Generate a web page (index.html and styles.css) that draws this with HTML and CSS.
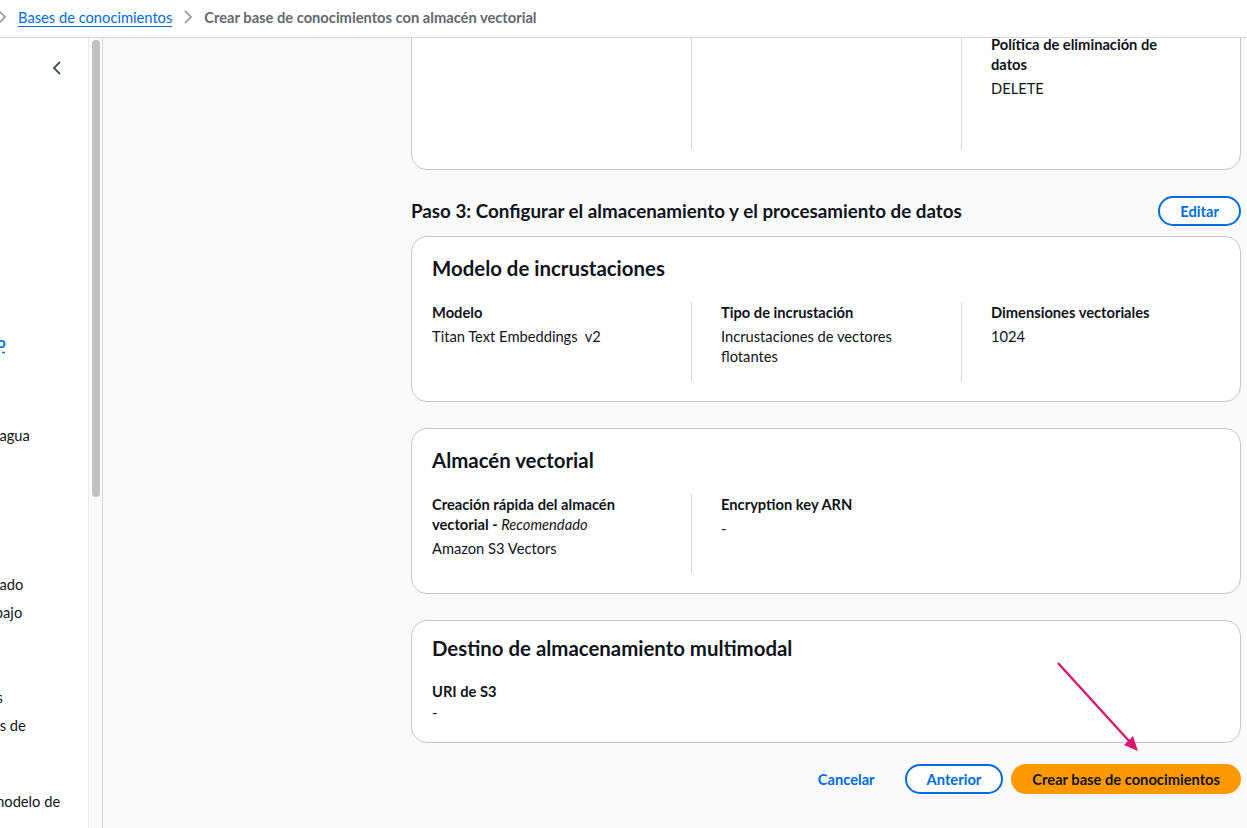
FILE: index.html
```html
<!DOCTYPE html>
<html lang="es">
<head>
<meta charset="utf-8">
<title>Crear base de conocimientos con almacén vectorial</title>
<link rel="stylesheet" href="styles.css">
</head>
<body>

<div class="crumbs">
  <svg class="chev" viewBox="0 0 10 16"><path d="M2 2l6 6-6 6"/></svg>
  <a href="#">Bases de conocimientos</a>
  <svg class="chev" viewBox="0 0 10 16"><path d="M2 2l6 6-6 6"/></svg>
  <span class="current">Crear base de conocimientos con almacén vectorial</span>
</div>

<div class="layout">
  <nav class="side">
    <svg class="collapse" viewBox="0 0 10 16"><path d="M8 2L2 8l6 6"/></svg>
    <ul class="nav">
      <li class="nav-link"><a href="#">Página de inicio – nuevo</a></li>
      <li class="gap-a">Detección de marca de agua</li>
      <li class="gap-b">Rendimiento aprovisionado</li>
      <li>Edición de flujos de trabajo</li>
      <li class="gap-c">Modelos personalizados</li>
      <li>Evaluaciones de trabajos de</li>
      <li class="gap-d">Solicitud del acceso al modelo de</li>
    </ul>
  </nav>
  <div class="scroll"><div class="thumb"></div></div>

  <main class="main">
    <!-- paso 2: bloque anterior, sólo se ve el final -->
    <section class="card card-top">
      <div class="cols">
        <div class="col"></div>
        <div class="col"></div>
        <div class="col">
          <div class="label">Política de eliminación de datos</div>
          <div class="value">DELETE</div>
        </div>
      </div>
    </section>

    <div class="step-head">
      <h2>Paso 3: Configurar el almacenamiento y el procesamiento de datos</h2>
      <button class="btn">Editar</button>
    </div>

    <section class="card">
      <h3>Modelo de incrustaciones</h3>
      <div class="cols">
        <div class="col">
          <div class="label">Modelo</div>
          <div class="value">Titan Text Embeddings&nbsp; v2</div>
        </div>
        <div class="col">
          <div class="label">Tipo de incrustación</div>
          <div class="value">Incrustaciones de vectores flotantes</div>
        </div>
        <div class="col">
          <div class="label">Dimensiones vectoriales</div>
          <div class="value">1024</div>
        </div>
      </div>
    </section>

    <section class="card">
      <h3>Almacén vectorial</h3>
      <div class="cols">
        <div class="col">
          <div class="label">Creación rápida del almacén vectorial - <em>Recomendado</em></div>
          <div class="value">Amazon S3 Vectors</div>
        </div>
        <div class="col">
          <div class="label">Encryption key ARN</div>
          <div class="value">-</div>
        </div>
      </div>
    </section>

    <section class="card card-single">
      <h3>Destino de almacenamiento multimodal</h3>
      <div class="label">URI de S3</div>
      <div class="value">-</div>
    </section>

    <div class="actions">
      <button class="btn-link">Cancelar</button>
      <button class="btn">Anterior</button>
      <button class="btn btn-primary">Crear base de conocimientos</button>
    </div>
  </main>
</div>

<!-- flecha de anotación -->
<svg class="arrow" viewBox="0 0 110 105" width="110" height="105">
  <line x1="18" y1="8" x2="89" y2="86" stroke="#d6186d" stroke-width="2.4"/>
  <polygon points="98,96 84,90 93,81" fill="#d6186d"/>
</svg>

</body>
</html>
```

FILE: styles.css
```css
* {
  box-sizing: border-box;
}
body {
  margin: 0;
  height: 828px;
  overflow: hidden;
  font-family: Lato, "Open Sans", "Liberation Sans", sans-serif;
  font-size: 14.7px;
  line-height: 20px;
  color: #0f141a;
  background-color: #fafafa;
  position: relative;
}
a {
  color: #006ce0;
}

/* breadcrumbs */
.crumbs {
  height: 38px;
  background-color: #ffffff;
  border-bottom: 1px solid #d5d5da;
  display: flex;
  align-items: center;
  gap: 11px;
  margin-left: -3px;
  padding-bottom: 4px;
}
.crumbs .chev {
  width: 10px;
  height: 16px;
  fill: none;
  stroke: #8c8c94;
  stroke-width: 1.5;
}
.crumbs a {
  text-decoration: underline;
  text-underline-offset: 3px;
}
.crumbs .current {
  color: #656871;
  font-weight: bold;
}

.layout {
  display: flex;
  height: 790px;
  overflow: hidden;
}

/* barra lateral */
.side {
  width: 88px;
  flex-shrink: 0;
  background-color: #ffffff;
  overflow: hidden;
  position: relative;
}
.collapse {
  position: absolute;
  left: 52px;
  top: 22px;
  width: 10px;
  height: 16px;
  fill: none;
  stroke: #414d5c;
  stroke-width: 1.8;
}
.nav {
  list-style: none;
  margin: 0;
  padding: 0;
  margin-left: -152px;
  width: 240px;
  padding-top: 294px;
}
.nav li {
  margin-bottom: 8px;
  white-space: nowrap;
}
.nav li.gap-a { margin-top: 73px; }
.nav li.gap-b { margin-top: 129px; }
.nav li.gap-c { margin-top: 65px; }
.nav li.gap-d { margin-top: 56px; }
.nav-link a {
  font-weight: bold;
  text-decoration: underline dashed;
  text-underline-offset: 4px;
}
.scroll {
  width: 15px;
  flex-shrink: 0;
  background-color: #fafafa;
  border-left: 1px solid #ebebeb;
  border-right: 1px solid #d5d5da;
  padding: 2px 2px 0 2px;
}
.thumb {
  height: 457px;
  background-color: #c1c1c1;
  border-radius: 5px;
  margin-left: 1px;
  width: 8px;
}

/* contenido */
.main {
  flex: 1;
  padding-left: 308px;
  padding-right: 6px;
}
.card {
  background-color: #ffffff;
  border: 1px solid #c6c6cd;
  border-radius: 16px;
  padding: 19px 20px 19px 20px;
  margin-bottom: 26px;
}
.card-top {
  margin-top: -40px;
  padding-top: 35px;
  margin-bottom: 0;
}
.card-top .col {
  height: 116px;
}
.card h3 {
  margin: 0 0 22px 0;
  font-size: 20.4px;
  line-height: 24px;
  font-weight: bold;
}
.card-single {
  padding-top: 15px;
  padding-bottom: 20px;
  margin-bottom: 0;
}
.card-single h3 {
  margin-bottom: 21px;
}
.cols {
  display: grid;
  grid-template-columns: 259px 270px 1fr;
}
.col {
  padding-bottom: 16px;
  padding-right: 32px;
}
.col + .col {
  border-left: 1px solid #d5d5da;
  padding-left: 29px;
}
.label {
  font-weight: bold;
}
.label em {
  font-weight: normal;
}
.value {
  margin-top: 4px;
}
.card-single .value {
  margin-top: 1px;
}

.step-head {
  display: flex;
  justify-content: space-between;
  align-items: center;
  margin-top: 26px;
  margin-bottom: 10px;
}
.step-head h2 {
  margin: 0;
  font-size: 18.8px;
  line-height: 22px;
}

.btn {
  font-family: inherit;
  font-size: 14.7px;
  font-weight: bold;
  color: #006ce0;
  background-color: #ffffff;
  border: 2px solid #006ce0;
  border-radius: 20px;
  height: 30px;
  padding: 0 20px;
}
.btn-link {
  font-family: inherit;
  font-size: 14.7px;
  font-weight: bold;
  color: #006ce0;
  background: none;
  border: none;
  padding: 0 10px;
}
.btn-primary {
  background-color: #ff9900;
  border-color: #ff9900;
  color: #0f141a;
  padding: 0 19px;
}
.actions {
  display: flex;
  justify-content: flex-end;
  align-items: center;
  gap: 8px;
  margin-top: 21px;
}
.actions .btn-link {
  margin-right: 12px;
}

.arrow {
  position: absolute;
  left: 1040px;
  top: 655px;
}
```
